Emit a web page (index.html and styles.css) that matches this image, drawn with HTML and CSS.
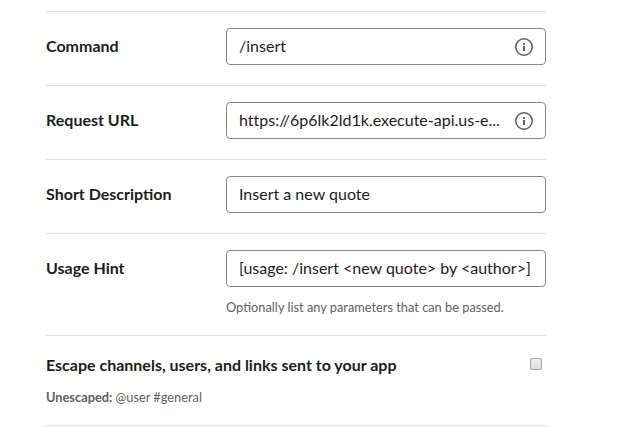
FILE: index.html
```html
<!DOCTYPE html>
<html lang="en">
<head>
<meta charset="utf-8">
<title>Slash command</title>
<link rel="stylesheet" href="styles.css">
</head>
<body>
<main class="form">
  <div class="row">
    <div class="label">Command</div>
    <div class="field"><div class="input"><span class="value">/insert</span>
      <svg class="info" viewBox="0 0 20 20"><circle cx="10" cy="10" r="8.2"/><path class="stem" d="M9 9h2v5h-2zM9 6h2v2h-2z"/></svg></div></div>
  </div>
  <div class="row">
    <div class="label">Request URL</div>
    <div class="field"><div class="input"><span class="value">https://6p6lk2ld1k.execute-api.us-e...</span>
      <svg class="info" viewBox="0 0 20 20"><circle cx="10" cy="10" r="8.2"/><path class="stem" d="M9 9h2v5h-2zM9 6h2v2h-2z"/></svg></div></div>
  </div>
  <div class="row">
    <div class="label">Short Description</div>
    <div class="field"><div class="input"><span class="value">Insert a new quote</span></div></div>
  </div>
  <div class="row hinted">
    <div class="label">Usage Hint</div>
    <div class="field"><div class="input"><span class="value">[usage: /insert &lt;new quote&gt; by &lt;author&gt;]</span></div>
      <p class="hint">Optionally list any parameters that can be passed.</p></div>
  </div>
  <div class="escape">
    <div class="title"><span>Escape channels, users, and links sent to your app</span><span class="check"></span></div>
    <p class="example"><b>Unescaped:</b> @user #general</p>
  </div>
</main>
</body>
</html>
```
FILE: styles.css
```css
* { box-sizing: border-box; }
body { margin: 0; background: #fff; color: #1d1c1d; font: 16px/22px Lato, "Liberation Sans", sans-serif; }
.form { width: 500px; margin: 11px 0 0 46px; border-bottom: 1px solid #ddd; height: 415px; }
.row { display: flex; height: 74px; padding-top: 16px; border-top: 1px solid #ddd; }
.row.hinted { height: 102px; }
.label { width: 180px; padding-top: 7px; font-weight: 700; }
.field { width: 320px; }
.input { display: flex; align-items: center; justify-content: space-between; height: 37px; padding: 0 11px 0 12px; border: 1px solid #868686; border-radius: 4px; }
.value { white-space: nowrap; padding-bottom: 1px; font-variant-ligatures: none; }
.info { width: 20px; height: 20px; fill: none; stroke: #616061; stroke-width: 1.6; flex: none; }
.info .stem { fill: #616061; stroke: none; }
.hint, .example { margin: 0; font-size: 12.8px; line-height: 18px; color: #616061; }
.hint { margin-top: 11px; }
.escape { border-top: 1px solid #ddd; padding-top: 18px; }
.title { display: flex; justify-content: space-between; font-weight: 700; }
.check { width: 12px; height: 12px; margin: 4px 4px 0 0; border: 1px solid #a5a5a5; border-radius: 2px; background: linear-gradient(#eee, #ddd); }
.example { margin-top: 12px; }
```
